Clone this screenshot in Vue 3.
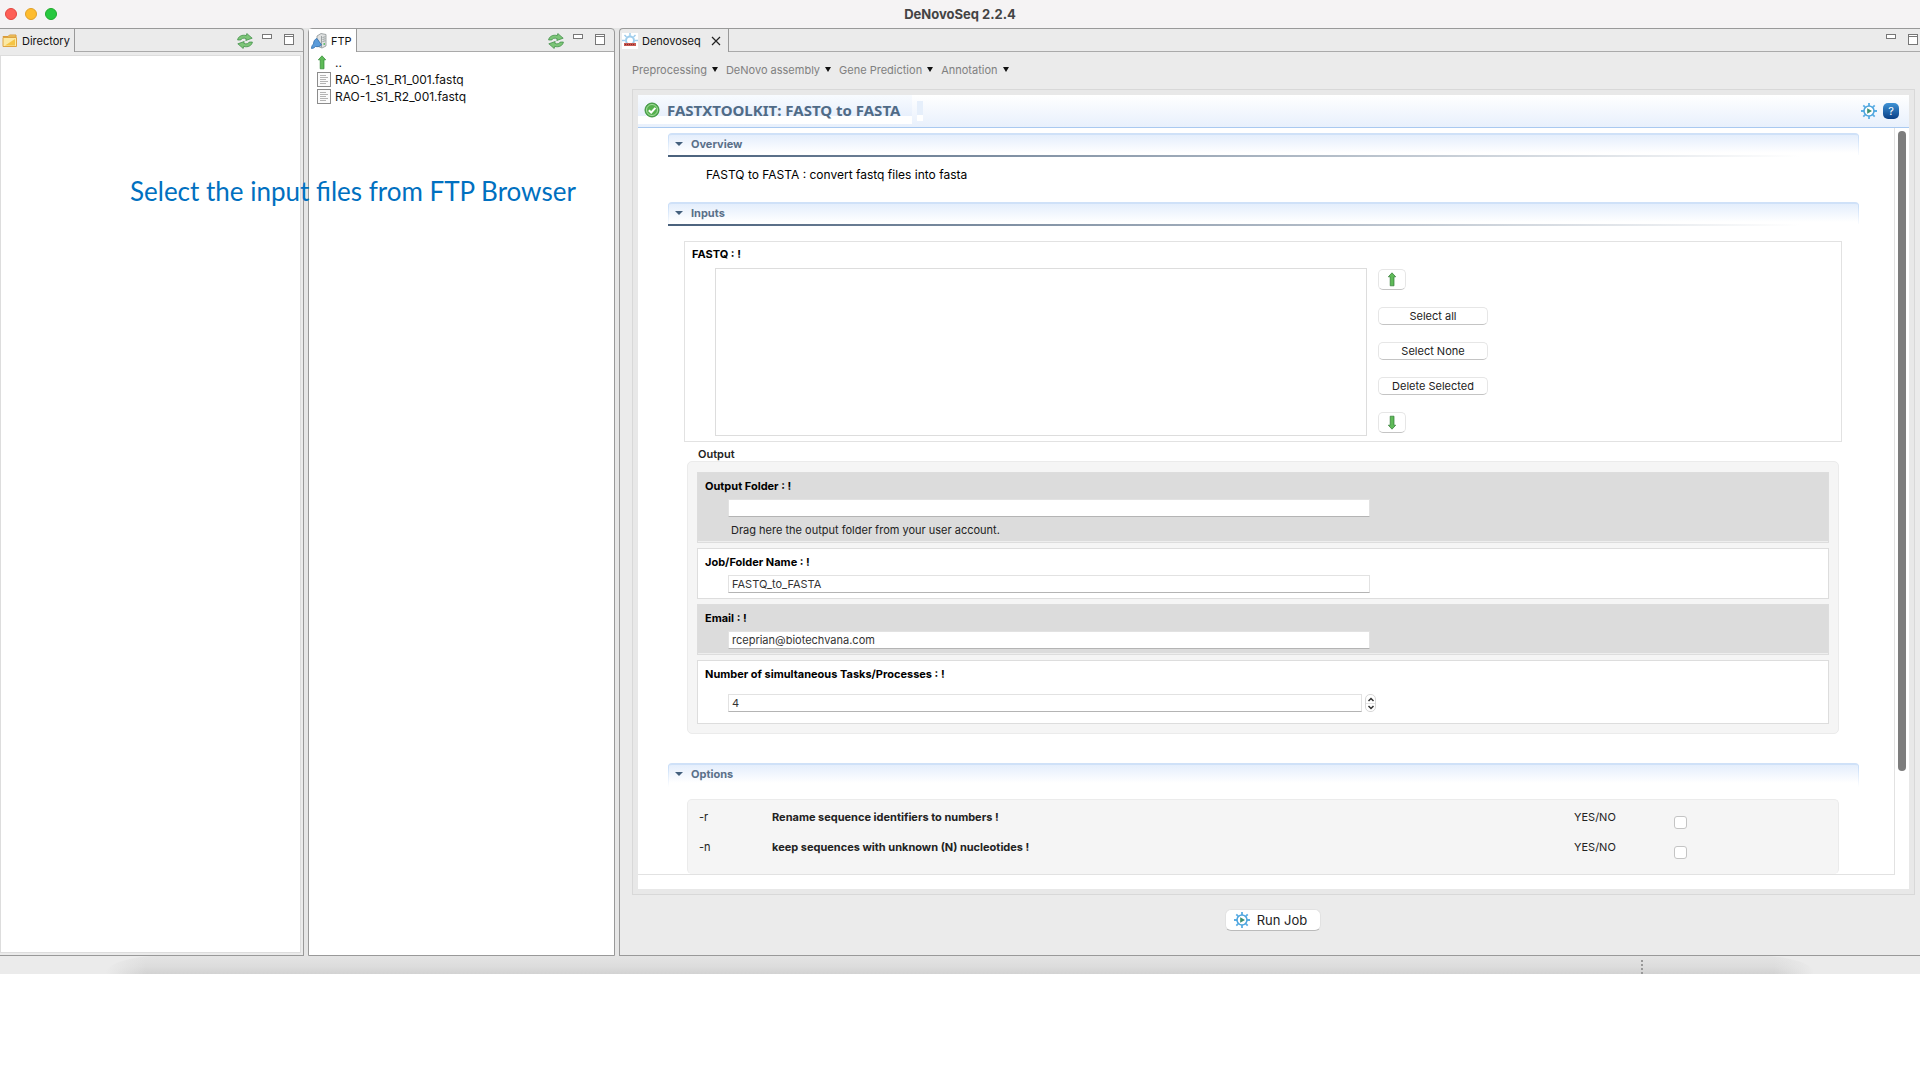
<template>
  <div class="app">
    <!-- Title bar -->
    <header class="title-bar">
      <div class="lights">
        <span class="light red"></span>
        <span class="light yellow"></span>
        <span class="light green"></span>
      </div>
      <h1 class="app-title">DeNovoSeq 2.2.4</h1>
    </header>

    <main class="workbench">
      <!-- Directory and FTP views -->
      <section v-for="view in views" :key="view.name" class="view" :class="view.kind">
        <div class="tab-row">
          <div class="tab">
            <svg v-if="view.kind === 'directory'" class="icon" viewBox="0 0 16 16">
              <path d="M1 3.500h5l1.500-1.500H14v2H1z" fill="#f6d36e" stroke="#d89b3a" />
              <path d="M1 4.500h13.500v9H1z" fill="#fbe9a4" stroke="#dfa440" />
              <path d="M3 12.500L13 6v6.500z" fill="#f5c445" />
            </svg>
            <svg v-else class="icon" viewBox="0 0 16 16">
              <path d="M6 3l4-2.500 5 1V13l-4 2-5-2z" fill="#dfe1e1" stroke="#8d9496" stroke-width=".8" />
              <path d="M10.500 3v11.500M11.500 4.500l3-.8M11.500 6.500l3-.8M11.500 8.500l3-.8" stroke="#8d9496" stroke-width=".8" />
              <path d="M12.500 11h1.500" stroke="#3fb54a" stroke-width="1.500" />
              <path d="M.5 15.500c0-2.500 1-3.500 2-4.500C2.500 8 4 6 6 5.500l4.500 6.500c-1.500 1.500-4 2-6 1.500-1 1-2 2-4 2z" fill="#5a9cdb" stroke="#2f6cab" stroke-width=".8" />
            </svg>
            <span>{{ view.name }}</span>
          </div>
          <div class="tools">
            <button class="tool refresh" :aria-label="'Refresh ' + view.name">
              <svg viewBox="0 0 16 16" width="16" height="16">
                <path d="M.6 7C1 3.500 5 1.300 9.300 2.600L9.800.5l5.400 4.700-6.400 2.300.3-1.900C6.500 4.700 4.500 5.300 3.800 7z" fill="#7cc577" stroke="#3a8a42" stroke-width=".7" />
                <path d="M15.400 9C15 12.500 11 14.700 6.700 13.400L6.200 15.500.8 10.800l6.400-2.300-.3 1.900c2.600.9 4.600.3 5.300-1.400z" fill="#7cc577" stroke="#3a8a42" stroke-width=".7" />
              </svg>
            </button>
            <button class="tool min" :aria-label="'Minimize ' + view.name"></button>
            <button class="tool max" :aria-label="'Maximize ' + view.name"></button>
          </div>
        </div>
        <div class="view-body">
          <ul v-if="view.files.length" class="files">
            <li v-for="file in view.files" :key="file" class="file">
              <svg v-if="file === '..'" class="file-icon" viewBox="0 0 14 15">
                <path d="M5 .8L8.700 4.800H7v9H3.200v-9H1.300z" fill="#5fbb58" stroke="#2f8a34" stroke-width=".7" />
              </svg>
              <svg v-else class="file-icon" viewBox="0 0 14 15">
                <rect x=".5" y=".5" width="13" height="14" fill="#fbfbfb" stroke="#8c8c8c" />
                <path d="M3 3.500h6M3 5.500h8M3 7.500h6M3 9.500h8M3 11.500h6" stroke="#b4b4b4" />
              </svg>
              <span>{{ file }}</span>
            </li>
          </ul>
        </div>
      </section>

      <!-- Denovoseq editor -->
      <section class="view editor">
        <div class="tab-row">
          <div class="tab">
            <svg class="icon" viewBox="0 0 16 16">
              <rect width="16" height="16" fill="#fff" />
              <circle cx="8" cy="7.500" r="4" fill="none" stroke="#9fcdec" stroke-width="2" />
              <path d="M8 0v3M2.500 2l2 2M13.500 2l-2 2M0 7.500h3M13 7.500h3" stroke="#9fcdec" stroke-width="1.500" />
              <path d="M2 10h12v3H2z" fill="#c95850" />
              <path d="M3 11.500h10" stroke="#7e2d2d" stroke-dasharray="1 1" />
            </svg>
            <span>Denovoseq</span>
            <button class="close" aria-label="Close Denovoseq">
              <svg viewBox="0 0 10 10" width="10" height="10">
                <path d="M1 1l8 8M9 1L1 9" stroke="#222" stroke-width="1.200" />
              </svg>
            </button>
          </div>
          <div class="tools">
            <button class="tool min" aria-label="Minimize editor"></button>
            <button class="tool max" aria-label="Maximize editor"></button>
          </div>
        </div>

        <nav class="menu">
          <button v-for="item in menu" :key="item" class="menu-item">
            {{ item }}<span class="caret"></span>
          </button>
        </nav>

        <div class="frame">
          <div class="form-head">
            <div class="form-title">
              <svg viewBox="0 0 16 16" width="16" height="16">
                <circle cx="8" cy="8" r="7" fill="#55b04d" stroke="#3b9140" />
                <circle cx="8" cy="8" r="5.500" fill="none" stroke="#a5dba0" />
                <path d="M4.800 8.200l2.400 2.300 4.200-4.600" fill="none" stroke="#fff" stroke-width="2" />
              </svg>
              <h2>FASTXTOOLKIT: FASTQ to FASTA</h2>
            </div>
            <span class="title-mark"></span>
            <div class="form-tools">
              <button class="tool" aria-label="Run">
                <svg viewBox="0 0 16 16" width="16" height="16">
                  <path d="M8 0v3M8 13v3M0 8h3M13 8h3M2.300 2.300l2 2M11.700 11.700l2 2M2.300 13.700l2-2M11.700 4.300l2-2" stroke="#5aaee4" stroke-width="1.800" />
                  <circle cx="8" cy="8" r="5" fill="#fff" stroke="#4fa5de" stroke-width="1.600" />
                  <path d="M6.200 5.200L11 8l-4.800 2.800z" fill="#3d9070" />
                </svg>
              </button>
              <button class="help" aria-label="Help">?</button>
            </div>
          </div>

          <div class="form-scroll">
            <div class="form-body">
              <!-- Overview -->
              <button class="section-head lined" @click="open.overview = !open.overview">
                <span class="twistie"></span>Overview
              </button>
              <p v-if="open.overview" class="overview">FASTQ to FASTA : convert fastq files into fasta</p>

              <!-- Inputs -->
              <button class="section-head lined" @click="open.inputs = !open.inputs">
                <span class="twistie"></span>Inputs
              </button>
              <div v-if="open.inputs" class="inputs">
                <div class="fastq">
                  <div class="label">FASTQ : !</div>
                  <div class="fastq-line">
                    <div class="list" role="listbox" aria-label="FASTQ files"></div>
                    <div class="list-buttons">
                      <button class="push arrow" aria-label="Move up">
                        <svg viewBox="0 0 10 15" width="10" height="15">
                          <path d="M5 .8L8.700 4.800H7v9H3.200v-9H1.300z" fill="#5fbb58" stroke="#2f7a34" stroke-width=".7" />
                        </svg>
                      </button>
                      <button class="push">Select all</button>
                      <button class="push">Select None</button>
                      <button class="push">Delete Selected</button>
                      <button class="push arrow" aria-label="Move down">
                        <svg viewBox="0 0 10 15" width="10" height="15">
                          <path d="M5 14.200L1.300 10.200H3.200v-9H7v9h1.700z" fill="#5fbb58" stroke="#2f7a34" stroke-width=".7" />
                        </svg>
                      </button>
                    </div>
                  </div>
                </div>

                <div class="group-title">Output</div>
                <div class="group output">
                  <div class="field shaded">
                    <label class="label" for="folder">Output Folder : !</label>
                    <div class="field-line">
                      <input id="folder" v-model="form.folder" type="text">
                    </div>
                    <p class="hint">Drag here the output folder from your user account.</p>
                  </div>
                  <div class="field">
                    <label class="label" for="job">Job/Folder Name : !</label>
                    <div class="field-line">
                      <input id="job" v-model="form.job" type="text">
                    </div>
                  </div>
                  <div class="field shaded">
                    <label class="label" for="email">Email : !</label>
                    <div class="field-line">
                      <input id="email" v-model="form.email" type="text">
                    </div>
                  </div>
                  <div class="field tasks">
                    <label class="label" for="tasks">Number of simultaneous Tasks/Processes : !</label>
                    <div class="field-line">
                      <div class="number">
                        <input id="tasks" v-model.number="form.tasks" type="number">
                        <div class="spinner">
                          <button aria-label="Increase" @click="form.tasks++">
                            <svg viewBox="0 0 8 5" width="8" height="5"><path d="M1.500 4L4 1.500 6.500 4" fill="none" stroke="#333" stroke-width="1.500" /></svg>
                          </button>
                          <button aria-label="Decrease" @click="form.tasks--">
                            <svg viewBox="0 0 8 5" width="8" height="5"><path d="M1.500 1L4 3.500 6.500 1" fill="none" stroke="#333" stroke-width="1.500" /></svg>
                          </button>
                        </div>
                      </div>
                    </div>
                  </div>
                </div>
              </div>

              <!-- Options -->
              <button class="section-head" @click="open.options = !open.options">
                <span class="twistie"></span>Options
              </button>
              <div v-if="open.options" class="group options">
                <div v-for="option in options" :key="option.flag" class="option">
                  <span>{{ option.flag }}</span>
                  <span class="option-name">{{ option.name }}</span>
                  <label :for="'opt' + option.flag">YES/NO</label>
                  <input :id="'opt' + option.flag" v-model="option.on" type="checkbox">
                </div>
              </div>
            </div>
            <div class="track">
              <div class="thumb"></div>
            </div>
          </div>
        </div>

        <div class="run-row">
          <button class="run">
            <svg viewBox="0 0 16 16" width="16" height="16">
              <path d="M8 0v3M8 13v3M0 8h3M13 8h3M2.300 2.300l2 2M11.700 11.700l2 2M2.300 13.700l2-2M11.700 4.300l2-2" stroke="#5aaee4" stroke-width="1.800" />
              <circle cx="8" cy="8" r="5" fill="#fff" stroke="#4fa5de" stroke-width="1.600" />
              <path d="M6.200 5.200L11 8l-4.800 2.800z" fill="#3d9070" />
            </svg>
            Run Job
          </button>
        </div>
      </section>

      <!-- Tip over the two side views -->
      <p class="tip">Select the input files from FTP Browser</p>
    </main>

    <footer class="status-bar">
      <div class="status-shade"><span class="grip"></span></div>
    </footer>
  </div>
</template>

<script setup>
  import { reactive } from 'vue'

  const views = [
    { name: 'Directory', kind: 'directory', files: [] },
    { name: 'FTP', kind: 'ftp', files: ['..', 'RAO-1_S1_R1_001.fastq', 'RAO-1_S1_R2_001.fastq'] }
  ]

  const menu = ['Preprocessing', 'DeNovo assembly', 'Gene Prediction', 'Annotation']

  const open = reactive({ overview: true, inputs: true, options: true })

  const form = reactive({
    folder: '',
    job: 'FASTQ_to_FASTA',
    email: 'rceprian@biotechvana.com',
    tasks: 4
  })

  const options = reactive([
    { flag: '-r', name: 'Rename sequence identifiers to numbers !', on: false },
    { flag: '-n', name: 'keep sequences with unknown (N) nucleotides !', on: false }
  ])
</script>

<style>
  body {
    margin: 0;
    background: #fff;
  }
</style>

<style scoped>
  .app {
    font-family: Inter, 'Liberation Sans', sans-serif;
    font-size: 11px;
    line-height: 14px;
    color: #222;
  }
  .app * {
    box-sizing: border-box;
  }
  button {
    font: inherit;
    color: inherit;
    padding: 0;
    border: none;
    background: none;
  }
  svg {
    display: block;
    flex: none;
  }
  p, h1, h2, ul {
    margin: 0;
    padding: 0;
  }

  /* Title bar */
  .title-bar {
    display: grid;
    grid-template-columns: 1fr auto 1fr;
    align-items: center;
    height: 28px;
    background: #f5f3f4;
  }
  .lights {
    display: flex;
    gap: 8px;
    padding-left: 5px;
  }
  .light {
    width: 12px;
    height: 12px;
    border-radius: 50%;
  }
  .light.red    { background: #fe5f57; border: 1px solid #e2463f; }
  .light.yellow { background: #febc2e; border: 1px solid #e0a028; }
  .light.green  { background: #28c840; border: 1px solid #1eaa2c; }
  .app-title {
    font-size: 13px;
    font-weight: 700;
    color: #444;
  }

  /* Views */
  .workbench {
    position: relative;
    display: grid;
    grid-template-columns: 304px 307px 1fr;
    gap: 4px;
    background: #e6e6e6;
  }
  .view {
    display: flex;
    flex-direction: column;
    min-width: 0;
    border: 1px solid #999;
    border-radius: 4px 4px 0 0;
    background: #ebebeb;
  }
  .view.directory {
    border-left: none;
    border-top-left-radius: 0;
  }
  .view.editor {
    border-right: none;
    border-top-right-radius: 0;
  }
  .tab-row {
    display: flex;
    height: 23px;
  }
  .tab {
    display: flex;
    align-items: center;
    gap: 4px;
    padding: 0 4px 0 2px;
    border-right: 1px solid #999;
    color: #111;
  }
  .ftp .tab {
    background: #fff;
  }
  .icon {
    width: 16px;
    height: 16px;
  }
  .close {
    margin: 0 3px 0 6px;
  }
  .tools {
    flex: 1;
    display: flex;
    justify-content: flex-end;
    align-items: flex-start;
    padding: 5px 9px 0 0;
    border-bottom: 1px solid #aaa;
  }
  .editor .tools {
    padding-right: 2px;
  }
  .refresh {
    margin: -1px 9px 0 0;
  }
  .min {
    width: 10px;
    height: 5px;
    margin-right: 12px;
    border: 1px solid #777;
    background: #fff;
  }
  .max {
    width: 10px;
    height: 11px;
    border: 1px solid #777;
    background: linear-gradient(#fff 1px, #777 1px 2px, #fff 2px);
  }
  .view-body {
    flex: 1;
    background: #fff;
  }
  .directory .view-body {
    margin: 3px 2px 2px 0;
    border: 1px solid #ddd;
  }
  .files {
    list-style: none;
    padding: 2px 8px;
  }
  .file {
    display: flex;
    align-items: center;
    gap: 4px;
    height: 17px;
    font-size: 12px;
    color: #111;
  }
  .file-icon {
    width: 14px;
    height: 15px;
  }

  /* Editor menu */
  .menu {
    display: flex;
    align-items: center;
    gap: 8px;
    height: 37px;
    padding: 0 12px 2px;
    color: #808080;
  }
  .menu-item {
    display: flex;
    align-items: center;
    gap: 5px;
  }
  .caret {
    border: 3px solid transparent;
    border-top: 5px solid #111;
    border-bottom: none;
  }

  /* Form frame */
  .frame {
    margin: 0 5px 0 12px;
    padding: 5px;
    border: 1px solid #d8d8d8;
    background: #e8e8e8;
  }
  .form-head {
    display: flex;
    height: 33px;
    background: linear-gradient(#fff, #e8f0fc);
    border-bottom: 1px solid #a9c9f0;
  }
  .form-title {
    display: flex;
    align-items: center;
    gap: 7px;
    height: 29px;
    padding: 0 12px 0 6px;
    background: linear-gradient(#f8fbff, #e8f0fc 21px, #fff 21px);
  }
  .form-title h2 {
    font-family: 'Noto Sans', sans-serif;
    font-size: 15px;
    line-height: 20px;
    font-weight: 700;
    color: #506b87;
    white-space: nowrap;
  }
  .title-mark {
    width: 6px;
    height: 20px;
    margin: 6px 0 0 5px;
    background: linear-gradient(#e6effb 14px, #fff 14px);
  }
  .form-tools {
    display: flex;
    align-items: center;
    gap: 6px;
    margin-left: auto;
    padding-right: 10px;
  }
  .help {
    width: 16px;
    height: 16px;
    border-radius: 5px;
    background: linear-gradient(#3f93d6, #0a3f86);
    color: #fff;
  }
  .form-scroll {
    display: flex;
    padding-bottom: 14px;
    background: #fff;
  }
  .form-body {
    flex: 1;
    min-width: 0;
    padding: 5px 35px 0 30px;
    border-right: 1px solid #e2e2e2;
    border-bottom: 1px solid #e2e2e2;
  }
  .track {
    width: 14px;
    padding: 3px 3px 0;
  }
  .thumb {
    width: 8px;
    height: 86%;
    border-radius: 4px;
    background: #7d7d7d;
  }

  /* Sections */
  .section-head {
    display: flex;
    align-items: center;
    gap: 8px;
    width: 100%;
    height: 24px;
    padding: 0 7px 4px;
    border-top: 2px solid #cfe1f8;
    border-radius: 4px 4px 0 0;
    background:
      linear-gradient(#c5dcf8, #fff) left / 1px 100% no-repeat,
      linear-gradient(#c5dcf8, #fff) right / 1px 100% no-repeat,
      linear-gradient(#e4eefc, #fff 18px);
    font-weight: 700;
    color: #5a7089;
  }
  .section-head.lined {
    background:
      linear-gradient(90deg, #4a617c, #fff 95%) bottom / 100% 2px no-repeat,
      linear-gradient(#c5dcf8, #fff) left / 1px 100% no-repeat,
      linear-gradient(#c5dcf8, #fff) right / 1px 100% no-repeat,
      linear-gradient(#e4eefc, #fff 18px);
  }
  .twistie {
    border: 4px solid transparent;
    border-top-color: #44607d;
    border-bottom: none;
  }
  .overview {
    margin: 10px 38px 19px;
    font-size: 12px;
    line-height: 16px;
    color: #000;
  }
  .label {
    display: block;
    font-weight: 700;
    color: #000;
  }

  /* FASTQ list */
  .fastq {
    margin: 15px 17px 0 16px;
    padding: 5px 7px;
    border: 1px solid #e2e2e2;
  }
  .fastq-line {
    display: grid;
    grid-template-columns: 652fr 456fr;
    gap: 11px;
    margin: 7px 0 0 23px;
  }
  .list {
    height: 168px;
    border: 1px solid #ddd;
  }
  .list-buttons {
    display: flex;
    flex-direction: column;
    align-items: flex-start;
    gap: 17px;
    padding-top: 1px;
  }
  .push {
    width: 110px;
    height: 18px;
    border: 1px solid #e6e6e6;
    border-bottom-color: #c4c4c4;
    border-radius: 5px;
    background: #fff;
  }
  .push.arrow {
    display: flex;
    align-items: center;
    justify-content: center;
    width: 28px;
    height: 21px;
  }

  /* Output group */
  .group-title {
    margin: 5px 30px 0;
    font-weight: 600;
  }
  .group {
    margin: 0 20px 0 19px;
    border: 1px solid #ebebeb;
    border-radius: 5px;
    background: #f5f5f5;
  }
  .output {
    display: flex;
    flex-direction: column;
    gap: 5px;
    margin-bottom: 29px;
    padding: 10px 9px 9px;
  }
  .field {
    padding: 6px 7px 5px;
    border: 1px solid #ddd;
    background: #fff;
  }
  .field.shaded {
    background: #dcdcdc;
    box-shadow: inset 0 -1px #eee;
  }
  .field-line {
    display: grid;
    grid-template-columns: 642fr 451fr;
    margin: 6px 0 0 23px;
  }
  .field-line input {
    width: 100%;
    min-width: 0;
    height: 18px;
    padding: 0 3px;
    border: 1px solid #e2e2e2;
    border-bottom-color: #b4b4b4;
    border-radius: 0;
    background: #fff;
    font: inherit;
    color: #333;
    outline: none;
    appearance: none;
  }
  .hint {
    margin: 6px 0 0 26px;
  }
  .tasks .field-line {
    margin-top: 13px;
    margin-bottom: 6px;
  }
  .number {
    display: flex;
    gap: 3px;
    margin-right: -6px;
  }
  .number input {
    appearance: textfield;
  }
  .number input::-webkit-inner-spin-button {
    appearance: none;
  }
  .spinner {
    display: flex;
    flex-direction: column;
    flex: none;
    width: 11px;
    height: 18px;
    border: 1px solid #d8d8d8;
    border-radius: 5px;
    background: linear-gradient(#fff 8px, #e4e4e4 8px 9px, #fff 9px);
  }
  .spinner button {
    flex: 1;
    display: flex;
    align-items: center;
    justify-content: center;
  }

  /* Options group */
  .options {
    display: flex;
    flex-direction: column;
    gap: 11px;
    margin-top: 12px;
    padding: 10px 0 15px 11px;
    border-bottom: none;
  }
  .option {
    display: grid;
    grid-template-columns: 73px 1fr 100px 164px;
  }
  .option-name {
    font-weight: 700;
  }
  .option input {
    appearance: none;
    width: 13px;
    height: 13px;
    margin: 6px 0 0;
    border: 1px solid #c4c4c4;
    border-radius: 3px;
    background: #fff;
  }
  .option input:checked {
    background: #2f7de1;
  }

  /* Run button */
  .run-row {
    display: flex;
    justify-content: center;
    padding: 14px 0 24px 6px;
  }
  .run {
    display: flex;
    align-items: center;
    gap: 7px;
    height: 22px;
    padding: 0 13px 0 8px;
    border: 1px solid #e2e2e2;
    border-bottom-color: #bbb;
    border-radius: 6px;
    background: #fff;
    font-size: 13px;
  }

  .tip {
    position: absolute;
    top: 147px;
    left: 130px;
    font-family: Lato, sans-serif;
    font-size: 26px;
    line-height: 32px;
    color: #0070c0;
    white-space: nowrap;
  }

  /* Status bar */
  .status-bar {
    height: 18px;
    padding: 0 106px;
    background: #ebebeb;
  }
  .status-shade {
    display: flex;
    justify-content: flex-end;
    height: 18px;
    padding: 4px 171px 0 0;
    border-radius: 60px 60px 0 0 / 20px 20px 0 0;
    background:
      linear-gradient(90deg, #ebebeb, transparent 40px calc(100% - 40px), #ebebeb),
      linear-gradient(#e4e4e4, #dcdcdc 60%, #d2d2d2);
  }
  .grip {
    border-left: 2px dotted #999;
  }
</style>
